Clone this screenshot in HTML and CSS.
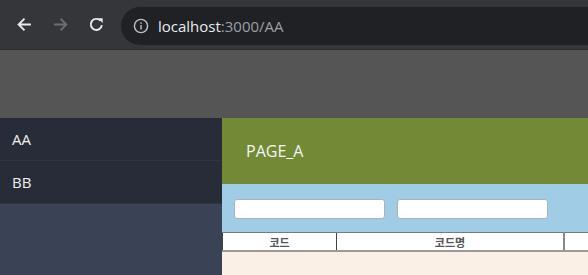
FILE: index.html
```html
<!DOCTYPE html>
<html lang="ko">
<head>
    <meta charset="UTF-8">
    <meta name="viewport" content="width=device-width, initial-scale=1.0">
    <title>AA</title>
    <link rel="stylesheet" href="styles.css">
</head>
<body>

    <div class="chrome">
        <div class="nav-buttons">
            <svg class="nav-icon" viewBox="0 0 16 16" width="17" height="17">
                <path d="M14 8H2.5M8 2.5L2.5 8L8 13.5" fill="none" stroke="#e8eaed" stroke-width="1.8"/>
            </svg>
            <svg class="nav-icon" viewBox="0 0 16 16" width="17" height="17">
                <path d="M2 8H13.5M8 2.5L13.5 8L8 13.5" fill="none" stroke="#6d6e71" stroke-width="1.8"/>
            </svg>
            <svg class="nav-icon" viewBox="0 0 16 16" width="17" height="17">
                <path d="M13 8.5A5.2 5.2 0 1 1 11.6 4.3" fill="none" stroke="#e8eaed" stroke-width="1.8"/>
                <path d="M9.3 2.2H13.8V6.7Z" fill="#e8eaed"/>
            </svg>
        </div>
        <div class="address">
            <svg class="info-icon" viewBox="0 0 16 16" width="16" height="16">
                <circle cx="8" cy="8" r="6.6" fill="none" stroke="#bdc1c6" stroke-width="1.4"/>
                <rect x="7.3" y="7" width="1.4" height="4.5" fill="#bdc1c6"/>
                <rect x="7.3" y="4.3" width="1.4" height="1.5" fill="#bdc1c6"/>
            </svg>
            <span class="host">localhost</span><span class="path">:3000/AA</span>
        </div>
    </div>

    <div class="topbar"></div>

    <div class="main">
        <div class="sidebar">
            <div class="menu-item">AA</div>
            <div class="menu-item">BB</div>
        </div>

        <div class="content">
            <div class="page-title">PAGE_A</div>
            <div class="search-bar">
                <input type="text" class="search-input">
                <input type="text" class="search-input">
            </div>
            <div class="grid-wrap">
                <table class="grid">
                    <thead>
                        <tr>
                            <th class="col-code">코드</th>
                            <th class="col-name">코드명</th>
                            <th class="col-etc"></th>
                        </tr>
                    </thead>
                </table>
            </div>
        </div>
    </div>

</body>
</html>
```

FILE: styles.css
```css
body {
    margin: 0;
    font-family: "Open Sans", "Noto Sans", sans-serif;
    background-color: #faf0e6;
    overflow: hidden;
}

/* Browser bar */
.chrome {
    height: 49px;
    background-color: #35363a;
    border-bottom: 1px solid #2c2d30;
    display: flex;
    align-items: center;
}

.nav-buttons {
    display: flex;
    gap: 19px;
    padding-left: 16px;
    width: 105px;
}

.nav-icon {
    display: block;
}

.address {
    flex: 1;
    height: 38px;
    margin-top: 2px;
    background-color: #202124;
    border-radius: 19px 0 0 19px;
    display: flex;
    align-items: center;
    padding-left: 12px;
    font-family: "Open Sans", "Noto Sans", sans-serif;
    font-size: 15px;
}

.info-icon {
    margin-right: 9px;
}

.host {
    color: #e8eaed;
}

.path {
    color: #9aa0a6;
}

.topbar {
    height: 68px;
    background-color: #555555;
}

/* Page */
.main {
    display: flex;
    height: 157px;
}

.sidebar {
    width: 222px;
    background-color: #3a4256;
    flex-shrink: 0;
}

.menu-item {
    height: 42px;
    line-height: 42px;
    padding-left: 12px;
    color: #f0f0f0;
    font-size: 15px;
    background-color: #282c38;
    border-bottom: 1px solid #313542;
}

.content {
    flex: 1;
    min-width: 0;
    background-color: #faf0e6;
}

.page-title {
    height: 66px;
    line-height: 66px;
    padding-left: 24px;
    background-color: #728a36;
    color: #f4f4f4;
    font-size: 16px;
}

.search-bar {
    height: 48px;
    background-color: #a0cce6;
    display: flex;
    align-items: center;
    gap: 12px;
    padding-left: 12px;
}

.search-input {
    width: 151px;
    height: 20px;
    box-sizing: border-box;
    border: 1px solid #a7b3bd;
    border-radius: 3px;
    background-color: #fff;
    padding: 0 4px;
    margin: 1px 0 0 0;
}

.grid-wrap {
    overflow: hidden;
}

.grid {
    border-collapse: collapse;
    table-layout: fixed;
    width: 500px;
    background-color: #fff;
    font-family: "Noto Sans CJK KR", sans-serif;
    font-size: 11px;
}

.grid th {
    height: 17px;
    padding: 0;
    font-weight: bold;
    color: #555;
    text-align: center;
    border-top: 1px solid #7a7a7a;
    border-bottom: 2px solid #999;
    border-left: 1px solid #444;
}

.col-code {
    width: 113px;
}

.col-name {
    width: 226px;
}

.grid th.col-etc {
    border-left: 2px solid #888;
}
```
